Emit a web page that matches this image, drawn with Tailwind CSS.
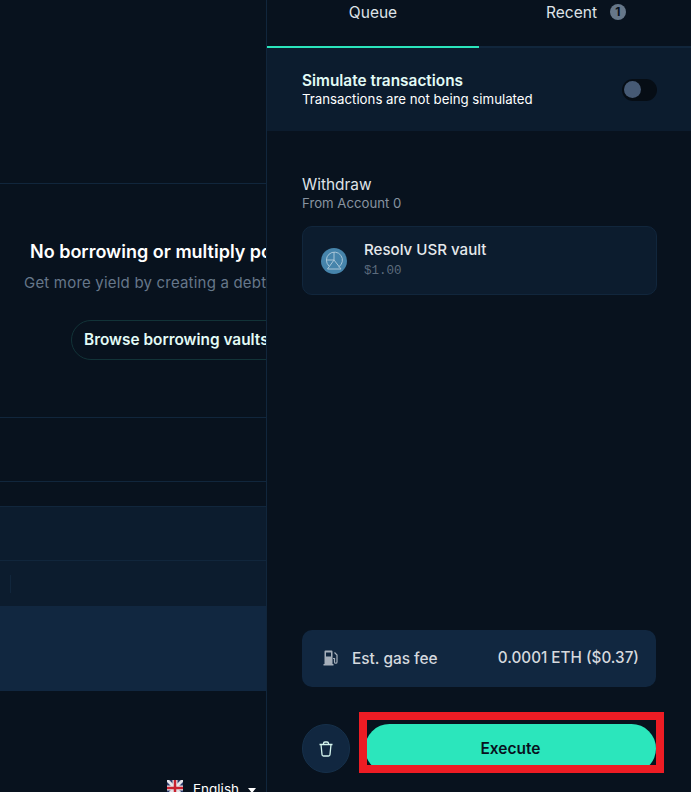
<!DOCTYPE html>
<html lang="en">
  <head>
    <meta charset="UTF-8" />
    <meta name="viewport" content="width=device-width, initial-scale=1.0" />
    <title>Transactions</title>
    <script src="https://cdn.jsdelivr.net/npm/@tailwindcss/browser@4"></script>
  </head>
  <body class="bg-[#08121e] font-['Inter',sans-serif]">
    <div class="relative flex h-[792px] w-[691px] overflow-hidden">
      <!-- page behind the drawer -->
      <div class="flex h-full w-[267px] shrink-0 flex-col overflow-hidden border-r border-[#11263c]">
        <div class="h-[184px] shrink-0 border-b border-[#11263c]"></div>
        <div class="h-[234px] shrink-0 border-b border-[#11263c] pt-[56px]">
          <p class="pl-[30px] text-[18px] leading-[24px] font-semibold whitespace-nowrap text-white">No borrowing or multiply positions yet</p>
          <p class="mt-[7px] pl-[24px] text-[15px] leading-[24px] tracking-[0.2px] whitespace-nowrap text-[#66778a]">Get more yield by creating a debt position</p>
          <div class="mt-[25px] ml-[71px] flex h-[40px] w-[240px] items-center rounded-full border border-[#123338] pl-[12px] text-[15.4px] font-semibold whitespace-nowrap text-[#e2fbf6]">Browse borrowing vaults</div>
        </div>
        <div class="h-[64px] shrink-0 border-b border-[#11263c]"></div>
        <div class="h-[24px] shrink-0"></div>
        <div class="h-[55px] shrink-0 border-y border-[#11263c] bg-[#0c1c2e]"></div>
        <div class="flex h-[45px] shrink-0 items-center bg-[#0c1c2e] pl-[10px]">
          <div class="h-[18px] w-px bg-[#11263c]"></div>
        </div>
        <div class="h-[85px] shrink-0 bg-[#112740]"></div>
        <div class="flex flex-1 items-start justify-end pt-[89px] pr-[10px]">
          <svg class="h-[16px] w-[16px] shrink-0" viewBox="0 0 16 16">
            <rect width="16" height="16" fill="#2b3a6b" />
            <path d="M0 0 16 16M16 0 0 16" stroke="#e6e3e8" stroke-width="3" />
            <path d="M8 0V16M0 8H16" stroke="#e6e3e8" stroke-width="5" />
            <path d="M8 0V16M0 8H16" stroke="#c8202f" stroke-width="2.5" />
          </svg>
          <span class="ml-[10px] text-[13.5px] leading-[18px] text-white">English</span>
          <span class="mt-[8px] ml-[9px] h-0 w-0 border-x-[4.500px] border-t-[5px] border-x-transparent border-t-white"></span>
        </div>
      </div>

      <!-- transaction drawer -->
      <div class="flex h-full w-[424px] shrink-0 flex-col">
        <div class="flex h-[46px] shrink-0">
          <div class="w-[212px] pt-[3px] text-center text-[15.5px] leading-[20px] text-[#dfe3e8]">Queue</div>
          <div class="flex w-[212px] items-start justify-center gap-[13px] pt-[3px] pl-[2px] text-[15.5px] leading-[20px] text-[#dfe3e8]">
            <span>Recent</span>
            <span class="mt-[1px] flex h-[16px] w-[16px] items-center justify-center rounded-full bg-[#66778a] text-[12px] leading-none font-bold text-[#08121e]">1</span>
          </div>
        </div>
        <div class="flex h-[2px] shrink-0">
          <div class="w-[212px] bg-[#2ae5bc]"></div>
          <div class="w-[212px] bg-[#11263c]"></div>
        </div>
        <div class="flex h-[83px] shrink-0 items-center justify-between bg-[#0c1c2e] pr-[34px] pl-[35px]">
          <div>
            <p class="text-[15.4px] leading-[19px] font-semibold text-[#e2fbf6]">Simulate transactions</p>
            <p class="text-[13.25px] leading-[19px] text-white">Transactions are not being simulated</p>
          </div>
          <div class="flex h-[22px] w-[35px] items-center rounded-full bg-[#060d15] pl-[2px]">
            <div class="h-[17px] w-[17px] rounded-full bg-[#465a75]"></div>
          </div>
        </div>
        <div class="flex-1 px-[35px] pt-[44px]">
          <p class="text-[15.4px] leading-[20px] text-[#dfe3e8]">Withdraw</p>
          <p class="-mt-[1px] text-[13.2px] leading-[18px] text-[#8793a0]">From Account 0</p>
          <div class="mt-[14px] flex h-[69px] w-[355px] items-center rounded-[10px] border border-[#11263c] bg-[#0c1c2e] pl-[18px]">
            <svg class="h-[26px] w-[26px] shrink-0" viewBox="0 0 26 26" fill="none">
              <circle cx="13" cy="13" r="13" fill="#4684ab" />
              <path d="M17.500 19A8 8 0 1 0 8 18" stroke="#a9c6d8" stroke-width="1" />
              <path d="M13 4V12M5.500 12H13L20 21H6.500L13 12" stroke="#a9c6d8" stroke-width="1" />
            </svg>
            <div class="mb-[2px] ml-[17px]">
              <p class="text-[15.1px] leading-[20px] font-medium text-[#e6e9ec]">Resolv USR vault</p>
              <p class="mt-[2px] font-['Liberation_Mono',monospace] text-[12.5px] leading-[18px] text-[#5c6b7c]">$1.00</p>
            </div>
          </div>
        </div>
        <div class="mx-[35px] flex h-[57px] shrink-0 items-center justify-between rounded-[10px] bg-[#112740] pr-[17px] pl-[21px]">
          <div class="flex items-center">
            <svg class="h-[16px] w-[16px] shrink-0" viewBox="0 0 16 16" fill="none">
              <path fill-rule="evenodd" d="M1.500 1.500A1 1 0 0 1 2.500.500H8.500A1 1 0 0 1 9.500 1.500V14H10.500V15.500H.500V14H1.500ZM3 2.500V6.500H8V2.500Z" fill="#a6afba" />
              <path d="M11.500 2.500 14 5V12A1.200 1.200 0 0 1 11.500 12V8.500H10" stroke="#a6afba" stroke-width="1.200" />
            </svg>
            <span class="ml-[13px] text-[15.4px] font-medium text-[#d5d9de]">Est. gas fee</span>
          </div>
          <span class="text-[15.25px] font-medium text-[#d5d9de]">0.0001 ETH ($0.37)</span>
        </div>
        <div class="mt-[37px] flex h-[68px] shrink-0 gap-[15px] pl-[35px]">
          <button class="flex h-[49px] w-[48px] items-center justify-center rounded-full border border-[#16304a] bg-[#112740]">
            <svg class="h-[16px] w-[16px]" viewBox="0 0 16 16" fill="none" stroke="#d5f5ee" stroke-width="1.300">
              <path d="M1.500 3.500H14.500M5.500 3.500V2.500A1.500 1.500 0 0 1 7 1H9A1.500 1.500 0 0 1 10.500 2.500V3.500M3 3.500 4 13.500A1.500 1.500 0 0 0 5.500 15H10.500A1.500 1.500 0 0 0 12 13.500L13 3.500" />
            </svg>
          </button>
          <button class="flex h-[49px] w-[291px] items-center justify-center rounded-full bg-[#2be6bc] text-[15.5px] font-semibold text-[#08121e]">Execute</button>
        </div>
      </div>

      <!-- red annotation over the button -->
      <div class="absolute top-[712px] left-[359px] h-[61px] w-[305px] border-[8px] border-[#ed1c24]"></div>
    </div>
  </body>
</html>
